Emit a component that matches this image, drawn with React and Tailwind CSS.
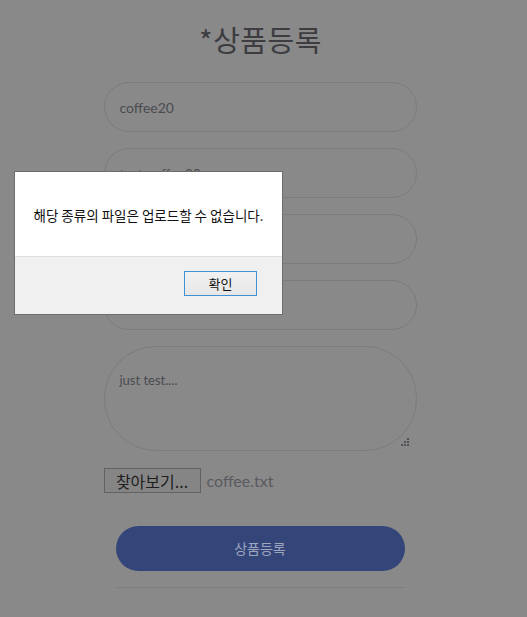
export default function App() {
  const sans = { fontFamily: 'Lato, "Noto Sans CJK KR", sans-serif' };
  const cjk = { fontFamily: '"Noto Sans CJK KR", "Noto Sans", sans-serif' };
  const inputs = ["coffee20", "test coffee20", "", ""];
  return (
    <div className="relative w-[527px] h-[617px] overflow-hidden bg-[#898989]" style={sans}>
      <div className="flex flex-col items-center pt-[19px]">
        <h1 className="text-[29px] leading-[40px] text-[#3c3c41] ml-[-6px] tracking-[0.5px]" style={cjk}>
          *상품등록
        </h1>
        <div className="mt-[23px] ml-[-7px] w-[313px] flex flex-col gap-[16px]">
          {inputs.map((v, i) => (
            <div
              key={i}
              className="h-[50px] rounded-full border border-[#7b7b81] flex items-center pl-[15px] text-[14px] text-[#4b4b51]"
            >
              {v}
            </div>
          ))}
          <div className="relative h-[105px] rounded-[52px] border border-[#7b7b81] pl-[15px] pt-[24px] text-[13px] text-[#4b4b51]">
            just test....
            <svg className="absolute right-[6px] bottom-[4px]" width="9" height="8" viewBox="0 0 9 8">
              <g fill="#505056">
                <rect x="6" y="0" width="2" height="2" />
                <rect x="3" y="3" width="2" height="2" />
                <rect x="6" y="3" width="2" height="2" />
                <rect x="0" y="6" width="2" height="2" />
                <rect x="3" y="6" width="2" height="2" />
                <rect x="6" y="6" width="2" height="2" />
              </g>
            </svg>
          </div>
        </div>
        <div className="mt-[17px] w-[313px] ml-[-7px] flex items-center">
          <div
            className="h-[25px] w-[97px] border border-[#626262] bg-[#858585] flex items-center justify-center text-[16px] text-[#1e1e1e] leading-none"
            style={cjk}
          >
            찾아보기...
          </div>
          <span className="ml-[6px] text-[16px] text-[#5a5a60]">coffee.txt</span>
        </div>
        <div
          className="mt-[33px] w-[289px] ml-[-7px] h-[45px] rounded-full bg-[#34457a] flex items-center justify-center text-[14px] text-[#9ea6bf]"
          style={cjk}
        >
          상품등록
        </div>
        <div className="mt-[16px] w-[289px] ml-[-7px] h-px bg-[#7e7e82]" />
      </div>

      <div className="absolute left-[14px] top-[171px] w-[269px] h-[144px] border border-[#6d6d6d] bg-white flex flex-col" style={cjk}>
        <div className="h-[84px] flex items-center justify-center text-[13.5px] text-[#111] pt-[2px]">
          해당 종류의 파일은 업로드할 수 없습니다.
        </div>
        <div className="flex-1 bg-[#f0f0f0] border-t border-[#dfdfdf] flex justify-end items-start pr-[25px] pt-[14px]">
          <div className="w-[73px] h-[25px] border border-[#3f90d4] bg-gradient-to-b from-[#f2f2f2] to-[#e6e6e6] flex items-center justify-center text-[13px] text-[#111]">
            확인
          </div>
        </div>
      </div>
    </div>
  );
}
